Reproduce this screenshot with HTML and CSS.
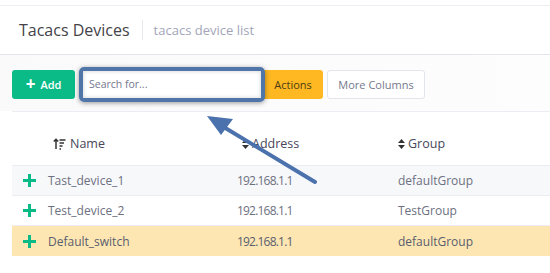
FILE: index.html
```html
<!DOCTYPE html>
<html lang="en">
<head>
  <meta charset="UTF-8" />
  <title>Tacacs Devices</title>
  <link rel="stylesheet" href="styles.css">
</head>
<body>

<!-- Subheader -->
<div class="subheader">
  <h3 class="title">Tacacs Devices</h3>
  <span class="sep"></span>
  <span class="desc">tacacs device list</span>
</div>

<!-- Toolbar -->
<div class="toolbar">
  <button class="btn btn-add"><span class="plus">+</span> Add</button>
  <div class="search-wrap">
    <input class="search" type="text" placeholder="Search for...">
  </div>
  <button class="btn btn-actions">Actions</button>
  <button class="btn btn-cols">More Columns</button>
</div>

<!-- Table -->
<div class="table">
  <div class="row head">
    <div class="cell c-name">
      <svg class="sort-icon" width="13" height="12" viewBox="0 0 13 12">
        <path d="M3 11V1.5M0.8 3.6L3 1.3L5.2 3.6" stroke="#333" stroke-width="1.5" fill="none"/>
        <path d="M6.5 2h6M6.5 5h4.5M6.5 8h3M6.5 11h1.5" stroke="#333" stroke-width="1.5"/>
      </svg>
      Name
    </div>
    <div class="cell c-addr">
      <svg class="caret" width="7" height="10" viewBox="0 0 7 10"><path d="M0 4L3.5 0L7 4Z M0 6L3.5 10L7 6Z" fill="#333"/></svg>
      Address
    </div>
    <div class="cell c-group">
      <svg class="caret" width="7" height="10" viewBox="0 0 7 10"><path d="M0 4L3.5 0L7 4Z M0 6L3.5 10L7 6Z" fill="#333"/></svg>
      Group
    </div>
  </div>
  <div class="row odd">
    <div class="cell c-name"><span class="add-ico"></span>Tast_device_1</div>
    <div class="cell c-addr ip">192.168.1.1</div>
    <div class="cell c-group">defaultGroup</div>
  </div>
  <div class="row">
    <div class="cell c-name"><span class="add-ico"></span>Test_device_2</div>
    <div class="cell c-addr ip">192.168.1.1</div>
    <div class="cell c-group">TestGroup</div>
  </div>
  <div class="row selected">
    <div class="cell c-name"><span class="add-ico"></span>Default_switch</div>
    <div class="cell c-addr ip">192.168.1.1</div>
    <div class="cell c-group">defaultGroup</div>
  </div>
</div>

<!-- annotation arrow -->
<svg class="arrow" width="550" height="273" viewBox="0 0 550 273">
  <line x1="315" y1="182" x2="222" y2="126" stroke="#4b72ad" stroke-width="4" stroke-linecap="round"/>
  <polygon points="207,116 233,119 221,135" fill="#4b72ad"/>
</svg>

</body>
</html>
```

FILE: styles.css
```css
* {
  margin: 0;
  padding: 0;
  box-sizing: border-box;
}

body {
  font-family: 'Open Sans', 'Liberation Sans', sans-serif;
  background-color: #fff;
  color: #595d6e;
  width: 550px;
  height: 273px;
  overflow: hidden;
  position: relative;
}

/* Subheader */
.subheader {
  margin-top: 5px;
  height: 50px;
  border-top: 1px solid #eceef4;
  border-bottom: 1px solid #e2e5ec;
  display: flex;
  align-items: center;
  padding-left: 19px;
}

.title {
  font-size: 16px;
  font-weight: 500;
  color: #434349;
}

.sep {
  width: 1px;
  height: 20px;
  background-color: #e7e8ef;
  margin: 0 11px 0 12px;
}

.desc {
  font-size: 13px;
  color: #a2a5b9;
}

/* Toolbar */
.toolbar {
  height: 56px;
  background: linear-gradient(to right, #fafafa, #fdfdfd);
  display: flex;
  align-items: center;
  padding: 2px 0 0 12px;
}

.btn {
  font-family: inherit;
  font-size: 11px;
  height: 29px;
  border-radius: 3px;
  border: none;
  cursor: pointer;
}

.btn-add {
  width: 63px;
  background-color: #0abb87;
  color: #fff;
  font-weight: 600;
  display: flex;
  align-items: center;
  justify-content: center;
  gap: 5px;
}

.plus {
  font-size: 17px;
  font-weight: 700;
  line-height: 1;
  margin-top: -2px;
}

.search-wrap {
  margin-left: 4px;
  width: 186px;
  height: 35px;
  border: 4px solid #5075a8;
  border-radius: 5px;
  box-shadow: 0 1px 5px rgba(0, 0, 0, 0.4);
  position: relative;
  z-index: 2;
}

.search {
  width: 100%;
  height: 100%;
  border: none;
  outline: none;
  padding-left: 6px;
  font-family: inherit;
  font-size: 10.5px;
  color: #595d6e;
  box-shadow: inset 0 0 4px rgba(0, 0, 0, 0.18);
}

.search::placeholder {
  color: #74788d;
}

.btn-actions {
  width: 60px;
  background-color: #ffb822;
  color: #4a3c12;
  border-radius: 0 3px 3px 0;
  margin-left: -2px;
}

.btn-cols {
  margin-left: 4px;
  width: 98px;
  background-color: #fff;
  border: 1px solid #e2e5ec;
  color: #74788d;
}

/* Table */
.table {
  margin-left: 12px;
  border-top: 1px solid #ebedf2;
}

.row {
  display: flex;
  align-items: center;
  height: 30px;
  border-bottom: 1px solid #ebedf2;
  font-size: 12px;
  color: #6c7080;
}

.row.head {
  height: 54px;
  padding-top: 10px;
  font-size: 12.5px;
  font-weight: 500;
  color: #48465b;
}

.row.odd {
  background-color: #f7f8fa;
}

.row.selected {
  background-color: #fde6b2;
  border-bottom: none;
  color: #595d6e;
}

.cell {
  display: flex;
  align-items: center;
}

.c-name {
  width: 225px;
  padding-left: 11px;
}

.row.head .c-name {
  padding-left: 41px;
}

.c-addr {
  width: 161px;
}

.ip {
  letter-spacing: -0.8px;
}

.row.head .c-addr {
  margin-left: 5px;
  width: 156px;
}

.sort-icon {
  margin-right: 4px;
}

.caret {
  margin-right: 3px;
}

.add-ico {
  width: 13px;
  height: 13px;
  margin-right: 12px;
  background:
    linear-gradient(#0abb87, #0abb87) center / 13px 3px no-repeat,
    linear-gradient(#0abb87, #0abb87) center / 3px 13px no-repeat;
}

/* annotation */
.arrow {
  position: absolute;
  top: 0;
  left: 0;
  pointer-events: none;
}
```
